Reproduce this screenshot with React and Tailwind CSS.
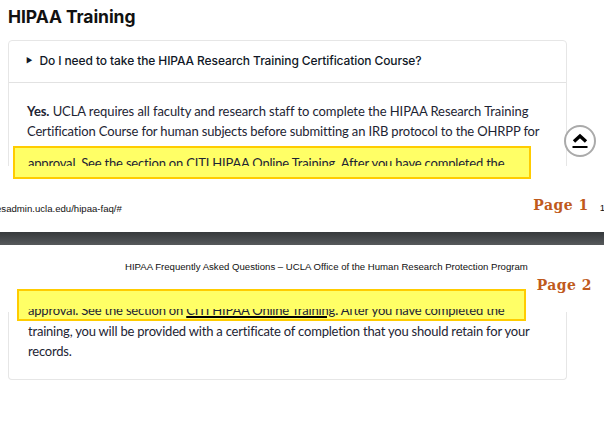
const body = "font-['Lato',sans-serif] text-[13px] leading-[20px] text-[#1d2433]";
const label = "font-['DejaVu_Serif_Condensed','DejaVu_Serif',serif] text-[15.5px] font-bold leading-[16px] tracking-[0.5px] text-[#c05a1c]";
const small = "font-['Liberation_Sans',sans-serif] text-[9.6px] leading-[12px] text-[#111111]";

function ScrollTop() {
  return (
    <div className="absolute left-[564px] top-[125px] flex h-[32px] w-[32px] items-center justify-center rounded-full border-2 border-[#aaaaaa] bg-white">
      <svg width="18" height="20" viewBox="0 0 18 20" aria-hidden="true">
        <path d="M3 10.5 L9 5 L15 10.5" fill="none" stroke="#000" strokeWidth="3.4" />
        <rect x="1.5" y="15" width="15" height="2" fill="#000" />
      </svg>
    </div>
  );
}

export default function App() {
  return (
    <div className="relative h-[427px] w-[604px] overflow-hidden bg-white">
      <section className="flex h-[232px] flex-col">
        <h1 className="pl-2 pt-[6px] font-['Inter',sans-serif] text-[17.5px] font-bold leading-[22px] tracking-[-0.08px] text-[#111111]">
          HIPAA Training
        </h1>
        <div className="ml-2 mt-[12px] h-[126px] w-[559px] overflow-hidden">
          <div className="h-[200px] rounded-t-[4px] border border-[#e6e6e6]">
            <div className="flex h-[42px] items-center gap-[7px] border-b border-[#e2e2e2] pb-[2px] pl-[17px] font-['Inter',sans-serif] text-[12px] font-medium tracking-[-0.1px] text-[#111827]">
              <span className="text-[7px] leading-none">▶</span>
              <span>Do I need to take the HIPAA Research Training Certification Course?</span>
            </div>
            <div className={`whitespace-nowrap px-[18px] pt-[18px] ${body}`}>
              <p className="tracking-[-0.08px]">
                <b>Yes.</b> UCLA requires all faculty and research staff to complete the HIPAA Research Training
              </p>
              <p className="tracking-[-0.15px]">
                Certification Course for human subjects before submitting an IRB protocol to the OHRPP for
              </p>
            </div>
          </div>
        </div>
        <div className="mt-[31px] flex items-end justify-between">
          <p className={`-mb-[2px] -ml-[4px] ${small}`}>esadmin.ucla.edu/hipaa-faq/#</p>
          <div className="flex items-end gap-[11px]">
            <span className={label}>Page 1</span>
            <span className={`-mb-[1px] -mr-[1px] ${small}`}>1</span>
          </div>
        </div>
      </section>

      <div className="h-[13px] bg-gradient-to-b from-[#36393c] to-[#56595b]" />

      <section>
        <p className={`pl-[125px] pt-[16px] ${small}`}>
          HIPAA Frequently Asked Questions – UCLA Office of the Human Research Protection Program
        </p>
        <div className={`flex justify-end pr-[12px] pt-[4px] ${label}`}>Page 2</div>
        <div className="ml-2 mt-[19px] h-[68px] w-[559px] rounded-b-[4px] border-x border-b border-[#e6e6e6] px-[19px] pt-[9px]">
          <p className={`whitespace-nowrap tracking-[-0.2px] ${body}`}>
            training, you will be provided with a certificate of completion that you should retain for your
            <br />
            records.
          </p>
        </div>
      </section>

      <div className="absolute left-[13px] top-[146px] h-[33px] w-[518px] overflow-hidden border-2 border-[#ffcc00] bg-[#ffff66]">
        <div className="h-[18px] overflow-hidden pl-[13px] pt-[5px]">
          <p className={`whitespace-nowrap tracking-[-0.19px] ${body}`}>
            approval. See the section on CITI HIPAA Online Training. After you have completed the
          </p>
        </div>
      </div>

      <div className="absolute left-[17px] top-[289px] h-[32px] w-[509px] overflow-hidden border-2 border-[#ffcc00] bg-[#ffff66]">
        <div className="mt-[18px] h-[9px] overflow-hidden pl-[9px]">
          <p className={`-mt-[9px] whitespace-nowrap tracking-[-0.19px] ${body}`}>
            approval. See the section on{" "}
            <u className="decoration-black decoration-[1.5px] underline-offset-[1px]">CITI HIPAA Online Training</u>
            . After you have completed the
          </p>
        </div>
      </div>

      <ScrollTop />
    </div>
  );
}
